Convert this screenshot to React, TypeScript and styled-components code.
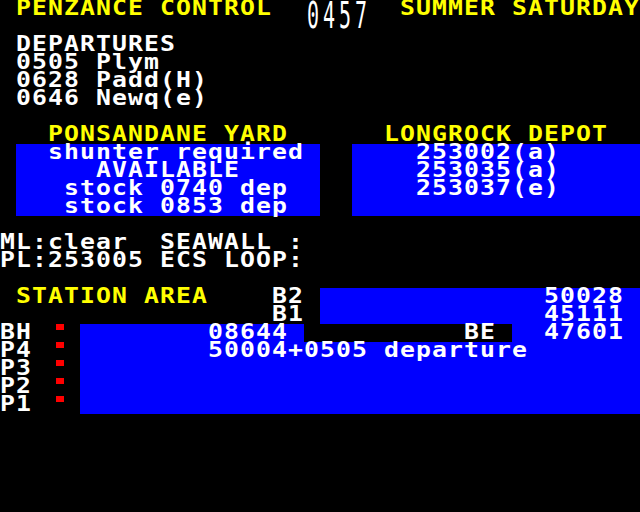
import React from "react";
import styled, { createGlobalStyle } from "styled-components";

const COL = 16;
const WIDEN = 1.18;

const Global = createGlobalStyle`
  html, body { margin: 0; padding: 0; background: #000; }
`;

const Screen = styled.div`
  width: 640px;
  height: 512px;
  background: #000;
  overflow: hidden;
  display: flex;
  flex-direction: column;
  font-family: "DejaVu Sans Mono", "Liberation Mono", monospace;
  font-weight: bold;
  font-size: 21px;
  color: #fff;
`;

const Line = styled.div`
  display: flex;
  flex: none;
  height: 18px;
  line-height: 16px;
  white-space: pre;
`;

/* Character-cell text: 16px per cell, glyphs widened like the micro's font */
const Txt = styled.span`
  display: inline-block;
  letter-spacing: ${COL / WIDEN - 12.643}px;
  transform: scaleX(${WIDEN});
  transform-origin: 0 0;
  white-space: pre;
`;

const Seg = styled.div<{ $w?: number; $bg?: string; $fg?: string; $pad?: number }>`
  flex: none;
  box-sizing: border-box;
  height: 18px;
  width: ${(p) => (p.$w !== undefined ? `${p.$w * COL}px` : "auto")};
  padding-left: ${(p) => (p.$pad ?? 0) * COL}px;
  background: ${(p) => p.$bg ?? "transparent"};
  color: ${(p) => p.$fg ?? "#fff"};
`;

const Box = styled.div<{ $w: number; $bg: string; $rows: number }>`
  flex: none;
  width: ${(p) => p.$w * COL}px;
  height: ${(p) => p.$rows * 18}px;
  background: ${(p) => p.$bg};
  display: flex;
  flex-direction: column;
`;

const BoxRow = styled.div<{ $pad: number }>`
  height: 18px;
  line-height: 16px;
  padding-left: ${(p) => p.$pad * COL}px;
  white-space: pre;
`;

const BoxPair = styled.div`
  display: flex;
  flex: none;
  height: 72px;
`;

const ClockSlot = styled.div`
  flex: none;
  width: ${8 * COL}px;
  padding-left: 35px;
  box-sizing: border-box;
`;

const Clock = styled.div`
  font-weight: normal;
  font-size: 20px;
  letter-spacing: 3.96px;
  line-height: 16px;
  transform: scaleY(1.85);
  transform-origin: 0 0;
`;

const Marker = styled.div`
  flex: none;
  width: 8px;
  height: 6px;
  background: #ff0000;
  margin-left: 24px;
  margin-right: 16px;
`;

const BLUE = "#0000ff";
const YELLOW = "#ffff00";

const Blank = () => <Line />;

const platformRows: { label: string; text?: string }[] = [
  { label: "P4", text: "50004+0505 departure" },
  { label: "P3" },
  { label: "P2" },
  { label: "P1" },
];

export default function App() {
  return (
    <>
      <Global />
      <Screen>
        <Line>
          <Seg $w={17} $pad={1} $fg={YELLOW}><Txt>PENZANCE CONTROL</Txt></Seg>
          <ClockSlot>
            <Clock>0457</Clock>
          </ClockSlot>
          <Seg $w={15} $fg={YELLOW}><Txt>SUMMER SATURDAY</Txt></Seg>
        </Line>
        <Blank />
        <Line><Seg $pad={1}><Txt>DEPARTURES</Txt></Seg></Line>
        <Line><Seg $pad={1}><Txt>0505 Plym</Txt></Seg></Line>
        <Line><Seg $pad={1}><Txt>0628 Padd(H)</Txt></Seg></Line>
        <Line><Seg $pad={1}><Txt>0646 Newq(e)</Txt></Seg></Line>
        <Blank />
        <Line>
          <Seg $w={24} $pad={3} $fg={YELLOW}><Txt>PONSANDANE YARD</Txt></Seg>
          <Seg $w={16} $fg={YELLOW}><Txt>LONGROCK DEPOT</Txt></Seg>
        </Line>
        <BoxPair>
          <Seg $w={1} />
          <Box $w={19} $bg={BLUE} $rows={4}>
            <BoxRow $pad={2}><Txt>shunter required</Txt></BoxRow>
            <BoxRow $pad={5}><Txt>AVAILABLE</Txt></BoxRow>
            <BoxRow $pad={3}><Txt>stock 0740 dep</Txt></BoxRow>
            <BoxRow $pad={3}><Txt>stock 0853 dep</Txt></BoxRow>
          </Box>
          <Seg $w={2} />
          <Box $w={18} $bg={BLUE} $rows={4}>
            <BoxRow $pad={4}><Txt>253002(a)</Txt></BoxRow>
            <BoxRow $pad={4}><Txt>253035(a)</Txt></BoxRow>
            <BoxRow $pad={4}><Txt>253037(e)</Txt></BoxRow>
          </Box>
        </BoxPair>
        <Blank />
        <Line><Seg><Txt>ML:clear  SEAWALL :</Txt></Seg></Line>
        <Line><Seg><Txt>PL:253005 ECS LOOP:</Txt></Seg></Line>
        <Blank />
        <Line>
          <Seg $w={17} $pad={1} $fg={YELLOW}><Txt>STATION AREA</Txt></Seg>
          <Seg $w={3}><Txt>B2</Txt></Seg>
          <Seg $w={20} $pad={14} $bg={BLUE}><Txt>50028</Txt></Seg>
        </Line>
        <Line>
          <Seg $w={17} />
          <Seg $w={3}><Txt>B1</Txt></Seg>
          <Seg $w={20} $pad={14} $bg={BLUE}><Txt>45111</Txt></Seg>
        </Line>
        <Line>
          <Seg $w={2}><Txt>BH</Txt></Seg>
          <Marker />
          <Seg $w={14} $pad={8} $bg={BLUE}><Txt>08644</Txt></Seg>
          <Seg $w={13} $pad={10}><Txt>BE</Txt></Seg>
          <Seg $w={8} $pad={2} $bg={BLUE}><Txt>47601</Txt></Seg>
        </Line>
        {platformRows.map((r) => (
          <Line key={r.label}>
            <Seg $w={2}><Txt>{r.label}</Txt></Seg>
            <Marker />
            <Seg $w={35} $pad={8} $bg={BLUE}>
              {r.text ? <Txt>{r.text}</Txt> : null}
            </Seg>
          </Line>
        ))}
      </Screen>
    </>
  );
}
